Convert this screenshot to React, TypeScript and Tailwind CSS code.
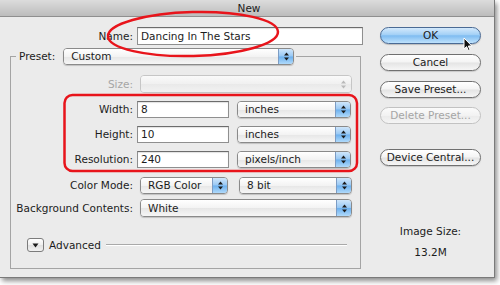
import React from "react";

function UpDown({ color }: { color: string }) {
  return (
    <svg width="7" height="11" viewBox="0 0 7 11">
      <path d="M3.5 1.5 L6 4.5 H1 Z" fill={color} />
      <path d="M3.5 9.5 L6 6.5 H1 Z" fill={color} />
    </svg>
  );
}

function Select({
  value,
  className,
  disabled,
  tall,
}: {
  value?: string;
  className: string;
  disabled?: boolean;
  tall?: boolean;
}) {
  return (
    <div
      className={`flex ${tall ? "h-[18px]" : "h-[17px]"} rounded-[4px] border overflow-hidden ${
        disabled
          ? "border-[#c6c6c6] shadow-none"
          : "border-[#8a8a8a] shadow-[0_1px_1px_rgba(0,0,0,0.18)]"
      } ${className}`}
    >
      <div
        className={`flex-1 flex items-center pl-[7px] whitespace-nowrap ${
          disabled
            ? "bg-[linear-gradient(to_bottom,#fafafa,#f0f0f0_50%,#e9e9e9_51%,#f2f2f2)]"
            : "bg-[linear-gradient(to_bottom,#ffffff,#f3f3f3_50%,#e6e6e6_51%,#f6f6f6)]"
        }`}
      >
        {value}
      </div>
      <div
        className={`w-[15px] flex items-center justify-center ${
          disabled
            ? "bg-[linear-gradient(to_bottom,#fafafa,#f0f0f0_50%,#e9e9e9_51%,#f2f2f2)]"
            : "border-l border-[#7c9cc4] bg-[linear-gradient(to_bottom,#cfe6fb,#98c8f4_48%,#6cb0ee_52%,#b0dafb)]"
        }`}
      >
        <UpDown color={disabled ? "#b9b9b9" : "#1b1b1b"} />
      </div>
    </div>
  );
}

function Input({ value, className }: { value: string; className: string }) {
  return (
    <div
      className={`bg-white border border-[#8f8f8f] border-t-[#6c6c6c] shadow-[inset_0_1px_1px_rgba(0,0,0,0.12)] flex items-center pl-[3px] whitespace-nowrap ${className}`}
    >
      {value}
    </div>
  );
}

function Button({
  label,
  primary,
  disabled,
}: {
  label: string;
  primary?: boolean;
  disabled?: boolean;
}) {
  const cls = primary
    ? "border-[#4a6a94] bg-[linear-gradient(to_bottom,#d3e9fc,#a3d0f6_45%,#7fbcf1_52%,#bfe2fc)] shadow-[0_1px_1px_rgba(0,0,0,0.2)]"
    : disabled
    ? "border-[#c2c2c2] text-[#a5a5a5] bg-[linear-gradient(to_bottom,#fbfbfb,#f2f2f2_50%,#ebebeb_52%,#f4f4f4)]"
    : "border-[#707070] bg-[linear-gradient(to_bottom,#ffffff,#f4f4f4_48%,#e4e4e4_52%,#f6f6f6)] shadow-[0_1px_1px_rgba(0,0,0,0.15)]";
  return (
    <div
      className={`h-[17px] w-[101px] rounded-full border flex items-center justify-center whitespace-nowrap ${cls}`}
    >
      {label}
    </div>
  );
}

export default function App() {
  return (
    <div className="w-[500px] h-[285px] bg-white relative overflow-hidden font-['Lucida_Grande','DejaVu_Sans',sans-serif] text-[10.5px] text-[#1c1c1c] leading-none">
      <div className="w-[495px] h-[278px] bg-[#ebebeb] border-r border-b border-[#7a7a7a] shadow-[2px_3px_5px_rgba(0,0,0,0.45)] flex flex-col">
        <div className="h-[17px] shrink-0 bg-[linear-gradient(to_bottom,#dcdcdc,#bcbcbc)] border-b border-[#8f8f8f] flex items-center justify-center pl-[4px]">
          New
        </div>
        <div className="flex flex-1">
          {/* left */}
          <div className="w-[372px]">
            <div className="mt-[10px] h-[18px] flex items-center">
              <div className="w-[133px] text-right whitespace-nowrap">Name:</div>
              <Input value="Dancing In The Stars" className="ml-[4px] w-[226px] h-[18px]" />
            </div>
            <fieldset className="mt-[3px] ml-[10px] w-[351px] h-[221px] border border-[#a4a4a4] p-0 m-0 min-w-0">
              <legend className="ml-[5px] p-0">
                <div className="flex items-center pl-[3px] pr-[2px]">
                  <span className="whitespace-nowrap">Preset:</span>
                  <Select value="Custom" className="ml-[8px] w-[231px]" />
                </div>
              </legend>
              <div className="mt-[10px] h-[18px] flex items-center">
                <div className="w-[122px] text-right text-[#a6a6a6] whitespace-nowrap">Size:</div>
                <Select className="ml-[7px] w-[212px]" disabled tall />
              </div>
              <div className="mt-[8px] h-[17px] flex items-center">
                <div className="w-[122px] text-right whitespace-nowrap">Width:</div>
                <Input value="8" className="ml-[4px] w-[92px] h-[17px]" />
                <Select value="inches" className="ml-[8px] w-[114px]" />
              </div>
              <div className="mt-[8px] h-[17px] flex items-center">
                <div className="w-[122px] text-right whitespace-nowrap">Height:</div>
                <Input value="10" className="ml-[4px] w-[92px] h-[17px]" />
                <Select value="inches" className="ml-[8px] w-[114px]" />
              </div>
              <div className="mt-[8px] h-[17px] flex items-center">
                <div className="w-[122px] text-right whitespace-nowrap">Resolution:</div>
                <Input value="240" className="ml-[4px] w-[92px] h-[17px]" />
                <Select value="pixels/inch" className="ml-[8px] w-[114px]" />
              </div>
              <div className="mt-[9px] h-[17px] flex items-center">
                <div className="w-[122px] text-right whitespace-nowrap">Color Mode:</div>
                <Select value="RGB Color" className="ml-[7px] w-[88px]" />
                <Select value="8 bit" className="ml-[11px] w-[113px]" />
              </div>
              <div className="mt-[5px] h-[18px] flex items-center">
                <div className="w-[122px] flex justify-end whitespace-nowrap">
                  <span>Background Contents:</span>
                </div>
                <Select value="White" className="ml-[7px] w-[212px]" tall />
              </div>
              <div className="mt-[21px] h-[14px] flex items-center">
                <div className="ml-[16px] w-[17px] h-[14px] rounded-[3px] border border-[#7c7c7c] bg-[linear-gradient(to_bottom,#ffffff,#efefef_50%,#e0e0e0_52%,#f2f2f2)] flex items-center justify-center">
                  <svg width="7" height="5" viewBox="0 0 7 5">
                    <path d="M0.5 0.5 H6.5 L3.5 4.5 Z" fill="#1b1b1b" />
                  </svg>
                </div>
                <span className="ml-[5px] whitespace-nowrap">Advanced</span>
                <div className="flex-1 ml-[5px] mr-[13px] h-[2px] border-t border-[#a9a9a9] border-b-white border-b" />
              </div>
            </fieldset>
          </div>
          {/* right */}
          <div className="ml-[8px] w-[101px] flex flex-col items-center">
            <div className="mt-[10px]">
              <Button label="OK" primary />
            </div>
            <div className="mt-[10px]">
              <Button label="Cancel" />
            </div>
            <div className="mt-[10px]">
              <Button label="Save Preset..." />
            </div>
            <div className="mt-[9px]">
              <Button label="Delete Preset..." disabled />
            </div>
            <div className="mt-[25px]">
              <Button label="Device Central..." />
            </div>
            <div className="mt-[59px] leading-[13px]">Image Size:</div>
            <div className="mt-[8px] leading-[13px]">13.2M</div>
          </div>
        </div>
      </div>

      {/* annotations */}
      <svg
        className="absolute left-0 top-0 pointer-events-none"
        width="500"
        height="285"
        viewBox="0 0 500 285"
      >
        <ellipse
          cx="193"
          cy="34"
          rx="85"
          ry="22"
          transform="rotate(-1.5 193 34)"
          fill="none"
          stroke="#e8141b"
          strokeWidth="2.5"
        />
        <rect
          x="64.5"
          y="95"
          width="292.5"
          height="76"
          rx="8"
          fill="none"
          stroke="#e8141b"
          strokeWidth="2.5"
        />
      </svg>
      {/* cursor */}
      <svg
        className="absolute left-[463px] top-[37px] pointer-events-none"
        width="10"
        height="15"
        viewBox="0 0 10 15"
      >
        <path
          d="M1 1 L1 12 L3.6 9.6 L5.4 13.6 L7 12.9 L5.3 9 L8.8 9 Z"
          fill="#111"
          stroke="#fff"
          strokeWidth="1"
          strokeLinejoin="round"
        />
      </svg>
    </div>
  );
}
